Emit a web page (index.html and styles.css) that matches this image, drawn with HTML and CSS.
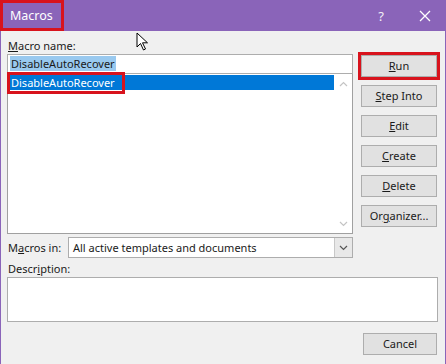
FILE: index.html
```html
<!DOCTYPE html>
<html>
<head>
<meta charset="utf-8">
<link rel="stylesheet" href="styles.css">
</head>
<body>
<div class="dialog">
  <div class="titlebar">
    <div class="title">Macros</div>
    <div class="tb-spacer"></div>
    <div class="tb-help">?</div>
    <div class="tb-close">
      <svg width="12" height="12" viewBox="0 0 12 12"><path d="M1 1L11 11M11 1L1 11" stroke="#fff" stroke-width="1.3" fill="none"/></svg>
    </div>
  </div>
  <div class="main">
    <div class="left">
      <div class="label"><u>M</u>acro name:</div>
      <div class="input"><span class="sel">DisableAutoRecover</span></div>
      <div class="listbox">
        <div class="items">
          <div class="item">DisableAutoRecover</div>
        </div>
        <div class="scroll">
          <svg width="9" height="6" viewBox="0 0 9 6"><path d="M1 5L4.5 1.5L8 5" stroke="#c4c4c4" stroke-width="1.2" fill="none"/></svg>
          <svg width="9" height="6" viewBox="0 0 9 6"><path d="M1 1L4.5 4.5L8 1" stroke="#c4c4c4" stroke-width="1.2" fill="none"/></svg>
        </div>
        <div class="mark mark-item"></div>
      </div>
      <div class="inrow">
        <div class="label">M<u>a</u>cros in:</div>
        <div class="combo">
          <div class="combo-text">All active templates and documents</div>
          <div class="combo-btn">
            <svg width="9" height="6" viewBox="0 0 9 6"><path d="M1 1L4.5 4.5L8 1" stroke="#555" stroke-width="1.2" fill="none"/></svg>
          </div>
        </div>
      </div>
    </div>
    <div class="right">
      <div class="btn run"><u>R</u>un</div>
      <div class="btn"><u>S</u>tep Into</div>
      <div class="btn"><u>E</u>dit</div>
      <div class="btn"><u>C</u>reate</div>
      <div class="btn"><u>D</u>elete</div>
      <div class="btn">Or<u>g</u>anizer...</div>
    </div>
  </div>
  <div class="desc">
    <div class="label">Descr<u>i</u>ption:</div>
    <div class="descbox"></div>
  </div>
  <div class="footer">
    <div class="btn cancel">Cancel</div>
  </div>
  <svg class="cursor" width="14" height="20" viewBox="0 0 14 20"><path d="M1 1L1 15L4.5 11.5L7.5 18L9.5 17L6.5 10.8L11.5 10.8Z" fill="#fff" stroke="#000" stroke-width="1" stroke-linejoin="round"/></svg>
</div>
</body>
</html>
```
FILE: styles.css
```css
* { box-sizing: border-box; }
html, body { margin: 0; padding: 0; }
body {
  width: 446px;
  height: 364px;
  overflow: hidden;
  font-family: "Noto Sans", "Open Sans", sans-serif;
  font-size: 11px;
  color: #1a1a1a;
  background: #f0f0f0;
}
u { text-decoration: underline; text-underline-offset: 1px; }
.dialog {
  position: relative;
  width: 446px;
  height: 364px;
  background: #f0f0f0;
  border-left: 1px solid #8a64b9;
  border-right: 1px solid #8a64b9;
  display: flex;
  flex-direction: column;
}
.titlebar {
  height: 31px;
  background: #8a64b9;
  display: flex;
  align-items: center;
  color: #fff;
  margin: 0 -1px;
}
.title {
  width: 64px;
  height: 31px;
  border: 3px solid #d8131d;
  display: flex;
  align-items: center;
  padding-left: 7px;
  font-size: 12.5px;
}
.tb-spacer { flex: 1; }
.tb-help { width: 20px; text-align: center; font-size: 13px; margin-right: 24px; opacity: 0.9; }
.tb-close { width: 20px; display: flex; justify-content: center; margin-right: 11px; }
.main {
  display: grid;
  grid-template-columns: 346px 76px;
  column-gap: 8px;
  padding: 7px 0 0 6px;
}
.left { display: flex; flex-direction: column; }
.label { height: 16px; line-height: 16px; padding-left: 1px; }
.input {
  height: 20px;
  background: #fff;
  border: 1px solid #adadad;
  padding: 1px 2px;
  line-height: 16px;
}
.sel { background: #99c9ef; padding: 0 1px; }
.listbox {
  position: relative;
  height: 160px;
  background: #fff;
  border: 1px solid #a0a0a0;
  border-top: none;
  display: flex;
}
.items { flex: 1; padding: 1px 1px; }
.item {
  background: #0078d7;
  color: #fff;
  height: 15px;
  line-height: 15px;
  padding-left: 2px;
}
.scroll {
  width: 17px;
  display: flex;
  flex-direction: column;
  justify-content: space-between;
  align-items: center;
  padding: 7px 0 6px;
}
.mark {
  position: absolute;
  border: 3px solid #d8131d;
  pointer-events: none;
}
.mark-item { left: -1px; top: -2px; width: 118px; height: 22px; }
.inrow {
  display: flex;
  align-items: center;
  margin-top: 3px;
  height: 21px;
}
.inrow .label { width: 61px; }
.combo {
  flex: 1;
  height: 21px;
  background: #fff;
  border: 1px solid #adadad;
  display: flex;
  align-items: center;
}
.combo-text { flex: 1; padding-left: 4px; }
.combo-btn {
  width: 18px;
  height: 19px;
  background: #e8e8e8;
  border-left: 1px solid #c8c8c8;
  display: flex;
  align-items: center;
  justify-content: center;
}
.right {
  display: flex;
  flex-direction: column;
  gap: 8px;
  padding-top: 17px;
}
.btn {
  height: 22px;
  background: #e1e1e1;
  border: 1px solid #adadad;
  display: flex;
  align-items: center;
  justify-content: center;
  line-height: 16px;
}
.run { outline: 3px solid #d8131d; }
.desc { padding: 3px 7px 0 6px; }
.descbox {
  height: 45px;
  background: #fff;
  border: 1px solid #adadad;
}
.footer {
  display: flex;
  justify-content: flex-end;
  padding: 11px 8px 0 0;
}
.cancel { width: 74px; }
.cursor { position: absolute; left: 135px; top: 32px; }
```
